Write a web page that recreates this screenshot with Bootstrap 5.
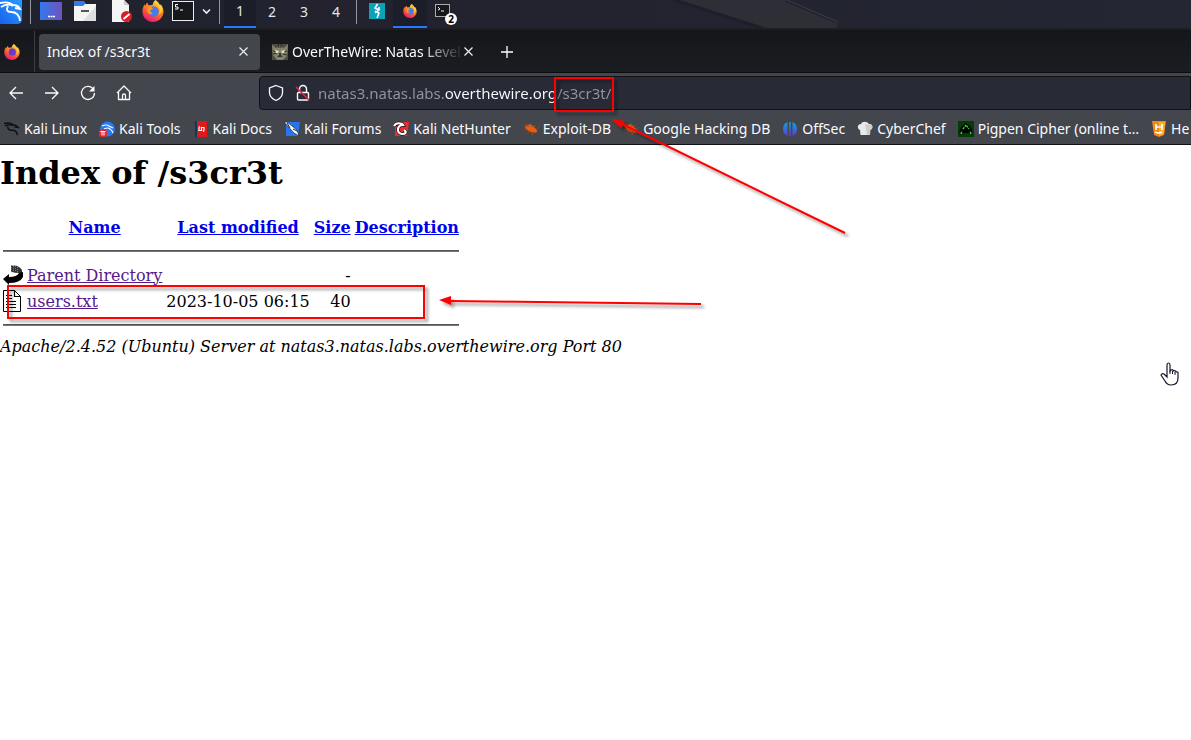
<!DOCTYPE html>
<html lang="en">
<head>
<meta charset="utf-8">
<meta name="viewport" content="width=device-width, initial-scale=1">
<title>Index of /s3cr3t</title>
<link href="https://cdn.jsdelivr.net/npm/bootstrap@5.3.0/dist/css/bootstrap.min.css" rel="stylesheet">
<style>
body{font-family:"Noto Sans","Open Sans",sans-serif;font-size:14px;line-height:20px;background:#fff;color:#000;overflow:hidden}
button{font:inherit;color:inherit;background:none;border:0;padding:0}
svg{display:block;flex:none}
.panel{height:28px;background:linear-gradient(90deg,#20222d 0,#22232f 50%,#242633);color:#e6e6ea;overflow:hidden}
.panel-icons{height:22px}
.rule{width:1px;height:24px;background:#96969b;flex:none}
.space{width:32px;height:28px;padding-bottom:4px}
.space.current,.task.current{background:#1b1d28;border-bottom:2px solid #2777ff}
.task{width:34px;height:28px}
.wallpaper{right:0;top:0;left:0}
.count{left:10px;top:9px;width:12px;height:12px;border-radius:50%;background:#fff;color:#000;font:bold 10px/12px "Noto Sans",sans-serif;text-align:center}
.tabstrip{height:45px;padding-top:1px;background:linear-gradient(#15161a,#1c1d22);border-top:2px solid #1d1e23;border-bottom:1px solid #0c0c0f;color:#fbfbfe}
.pinned{width:35px;border-right:1px solid #3c3d42}
.tab{height:36px;width:221px;border-radius:4px}
.tab.active{background:#44464e}
.fade-label{white-space:nowrap;width:172px;-webkit-mask-image:linear-gradient(90deg,#000 75%,transparent);mask-image:linear-gradient(90deg,#000 75%,transparent)}
.toolbar{background:#44464e;color:#fbfbfe;border-bottom:1px solid #111217}
.navrow{height:40px}
.tool{width:36px;height:36px}
.spring{width:115px}
.address{height:34px;background:#282a36;border:1px solid #111217;border-radius:4px 0 0 4px}
.address input{font-size:15px;line-height:20px;height:30px;padding:0;border:0;outline:0;-webkit-text-fill-color:transparent;color:#fbfbfe;background:linear-gradient(90deg,#94959e 127px,#fbfbfe 127px,#fbfbfe 239px,#94959e 239px);-webkit-background-clip:text;background-clip:text}
.marks{height:31px;gap:12px;white-space:nowrap;overflow:hidden}
.marks a{color:#fbfbfe;text-decoration:none;gap:4px;flex:none}
.listing{font-family:"DejaVu Serif",serif;font-size:16px;line-height:19px}
.listing h1{font-size:32px;font-weight:bold;line-height:38px;margin:0;padding:9px 0 21px}
.listing table{border-collapse:separate;border-spacing:2px}
.listing td,.listing th{padding:1px;height:24px;vertical-align:middle;white-space:pre}
.listing th{text-align:center}
.listing th a{color:#00e}
.listing td a{color:#551a8b}
.listing .line th{height:20px}
.listing hr{margin:8px 0;opacity:1;border:0;border-top:1px solid #555;border-bottom:1px solid #777}
.listing address{margin:0;font-style:italic;line-height:19px}
.notes{left:0;top:0;pointer-events:none}
</style>
</head>
<body>
<svg width="0" height="0" class="position-absolute" aria-hidden="true">
<defs>
<linearGradient id="ffa" x1=".8" y1="0" x2=".3" y2="1"><stop offset="0" stop-color="#fff04a"/><stop offset=".35" stop-color="#ff9a1e"/><stop offset=".7" stop-color="#ff4a3a"/><stop offset="1" stop-color="#e31587"/></linearGradient>
<symbol id="fox" viewBox="0 0 24 24"><path d="M15 0c2 2 3.500 3 4.500 5.500 1-.2 1-.9 1-.9C23 8 23.700 11 23.400 14 22.500 20 17.500 24 12 24 5.500 24 .5 19 .5 12.500c0-3 .8-5.800 2.500-8 0 1 .2 1.500.6 2C4 5 5 3.500 6 3c0 1 .4 2 1 2.600 1.500.3 3-.4 4.500-.2C12 3 13 1 15 0z" fill="url(#ffa)"/><circle cx="12.500" cy="12.500" r="5.800" fill="#477bea"/><path d="M7 7c2 .3 3.500.6 5 2-.5 1-2 1.500-3 2 0 2 1 3.500 3 3.800-3 2.200-6-.3-6.500-3z" fill="#ff9721"/><path d="M16 5c3 2 5 6 2 11 5-3 5-8 1.500-10.500z" fill="#ffd43a"/></symbol>
<symbol id="dragon" viewBox="0 0 16 16"><path d="M0 2.500c3-.8 7-.6 9 1.200M1 5c2.500-1.500 6-1.500 8.500-.5M4 5.500C3.500 8 5 9.300 8 9.200c3-.1 5 1.200 5.500 5M9 3.700c2 0 3.500.8 5 2.600l-3.500-.4" fill="none" stroke="currentColor" stroke-width="1.500"/></symbol>
<symbol id="bug" viewBox="0 0 16 16"><path d="M2 6c3-3 6-3 8-1l3 3c2 2 1 4-1 3.600C8 12 4 10 2 6z" fill="#ec5e10"/><path d="M1 8l4 1M3 3l3 3M8 2l1 4M12 4l-1 3M5 12l2-3M9 14l1-4M14 8l2-2M1 5h4" stroke="#9c4a20" stroke-width="1"/></symbol>
</defs>
</svg>

<header class="panel position-relative d-flex">
  <svg class="wallpaper position-absolute" width="100%" height="28" aria-hidden="true"><path d="M679 0h107l52 22-2 6h-70z" fill="#2d2e36"/><path d="M674 0l88 28" stroke="#1e1f2b" stroke-width="3"/><path d="M787 0l51 22" stroke="#393a47"/><path d="M785 1l52 22" stroke="#1c1d2a"/></svg>
  <button class="position-relative" aria-label="Applications"><svg width="22" height="28"><defs><linearGradient id="kb" x1="0" y1="1" x2="1" y2="0"><stop stop-color="#1763ee"/><stop offset="1" stop-color="#299bff"/></linearGradient></defs><path d="M0 0h22v19q0 5-5 5H0z" fill="url(#kb)"/><path d="M0 3q9-2 13 2M1 7q7-4 12-1M8 6q-3 6 3 6 8 0 9 9M13 5q5 0 7 4l-5-1" fill="none" stroke="#fff" stroke-width="1.800"/></svg></button>
  <span class="rule ms-2 me-2 position-relative"></span>
  <div class="panel-icons d-flex align-items-center position-relative">
    <button aria-label="Desktop"><svg width="23" height="22"><defs><linearGradient id="dk"><stop stop-color="#3478ef"/><stop offset="1" stop-color="#7052bd"/></linearGradient></defs><path d="M1 2h22v18H1z" fill="url(#dk)"/><path d="M9 16.500h7" stroke="#fff" stroke-width="1.500" stroke-dasharray="2 .5"/></svg></button>
    <button class="ms-2 ps-1" aria-label="Files"><svg width="22" height="22"><path d="M0 1h10l2 3h9v5H0z" fill="#3579e8"/><path d="M0 6h9l2-2h11v17H0z" fill="#f4f4f4"/><path d="M22 6v15H9z" fill="#dedee0"/><path d="M7 11h8" stroke="#555" stroke-width="2"/></svg></button>
    <button class="ms-3" aria-label="Text editor"><svg width="21" height="23"><path d="M0 0h12l5 5v17H0z" fill="#f5f5f5"/><path d="M12 0v5h5z" fill="#ccc"/><circle cx="14.500" cy="16.500" r="5.500" fill="#d81d26"/><path d="M11.500 19l6-5" stroke="#fff" stroke-width="2"/></svg></button>
    <button class="ms-2" aria-label="Firefox"><svg width="23" height="22"><use href="#fox" x="1" width="22" height="22"/></svg></button>
    <button class="ms-2" aria-label="Terminal"><svg width="22" height="22"><rect x=".5" y="1.500" width="21" height="19" fill="#17181b" stroke="#eee"/><path d="M6 4.500H3.500V7H6v2H3M8 10h3" fill="none" stroke="#fff"/></svg></button>
    <button class="ms-2" aria-label="More terminals"><svg width="9" height="22"><path d="M1 9.500l3.500 3.500L8 9.500" fill="none" stroke="#eee" stroke-width="1.700"/></svg></button>
  </div>
  <span class="rule ms-2 me-1 position-relative"></span>
  <button class="space current position-relative">1</button><button class="space position-relative">2</button><button class="space position-relative">3</button><button class="space position-relative">4</button>
  <span class="rule ms-1 me-2 position-relative"></span>
  <button class="position-relative ms-1 me-2" aria-label="Burp Suite"><svg width="16" height="28"><path d="M0 3h16v16H0z" fill="#0ca3b8"/><path d="M8.500 4L6 8l4 2-4 3M10 7v3M6 11l4 2-2 5" fill="none" stroke="#fff" stroke-width="1.500"/></svg></button>
  <button class="task current position-relative d-flex justify-content-center pt-1" aria-label="Firefox window"><svg width="14" height="14"><use href="#fox"/></svg></button>
  <button class="position-relative align-self-start mt-1 ms-2" aria-label="Terminal windows"><svg width="16" height="14"><rect x=".5" y=".5" width="14" height="12" fill="#17181b" stroke="#aaa"/><path d="M3 3l2 2-2 1M6 7h3" fill="none" stroke="#eee"/></svg><span class="count position-absolute">2</span></button>
</header>

<nav class="tabstrip d-flex align-items-center" aria-label="Tabs">
  <div class="pinned align-self-stretch d-flex align-items-center ps-1"><svg width="16" height="16"><use href="#fox"/><circle cx="8" cy="8" r="3.500" fill="#7435c9"/></svg></div>
  <div class="tab active d-flex align-items-center justify-content-between ms-1 px-2"><span>Index of /s3cr3t</span><button class="pe-1" aria-label="Close tab"><svg width="9" height="9"><path d="M.5.500l8 8m0-8l-8 8" stroke="#eee" stroke-width="1.200"/></svg></button></div>
  <div class="d-flex align-items-center ps-2 ms-1">
    <svg width="16" height="16"><path d="M0 0h16v16H0z" fill="#4c4d40"/><path d="M0 1l4 3 4-2 4 2 4-4-1 12-4 4H5l-4-5z" fill="#85826c"/><path d="M6 0l1 4M9 0v4M1 7l4 1M15 7l-4 1M1 10l4-1M15 11l-4-1" stroke="#292b25"/><path d="M3 6l4 1-1 2H4zM13 6L9 7l1 2h2z" fill="#dce0bb"/><path d="M7 9h2v2l2 2H5l2-2z" fill="#38372f"/></svg>
    <span class="fade-label ms-1">OverTheWire: Natas Level</span>
    <button aria-label="Close second tab"><svg width="9" height="9"><path d="M.5.500l8 8m0-8l-8 8" stroke="#eee" stroke-width="1.200"/></svg></button>
  </div>
  <button class="ms-4 ps-1" aria-label="New tab"><svg width="12" height="12"><path d="M6 0v12M0 6h12" stroke="#fff" stroke-width="1.300"/></svg></button>
</nav>

<div class="toolbar">
  <div class="navrow d-flex align-items-center">
    <div class="d-flex flex-shrink-0">
      <button class="tool d-flex justify-content-center align-items-center pe-1" aria-label="Back"><svg width="16" height="16" fill="none" stroke="#fbfbfe" stroke-width="1.300"><path d="M15 8H2m6-6L2 8l6 6"/></svg></button>
      <button class="tool d-flex justify-content-center align-items-center pe-1" aria-label="Forward"><svg width="16" height="16" fill="none" stroke="#fbfbfe" stroke-width="1.300"><path d="M1 8h13M8 2l6 6-6 6"/></svg></button>
      <button class="tool d-flex justify-content-center align-items-center pe-1" aria-label="Reload"><svg width="16" height="16" fill="none" stroke="#fbfbfe" stroke-width="1.300"><path d="M13.500 4.500A6.500 6.500 0 1 0 14.500 8"/><path d="M14.500 1v5.500H9z" fill="#fbfbfe" stroke="none"/></svg></button>
      <button class="tool d-flex justify-content-center align-items-center pe-1" aria-label="Home"><svg width="16" height="16" fill="none" stroke="#fbfbfe" stroke-width="1.300" stroke-linejoin="round"><path d="M1 8l7-7 7 7M2.500 7v7.500h11V7M6.500 14v-3.500a1.500 1.500 0 0 1 3 0V14"/></svg></button>
    </div>
    <div class="spring flex-shrink-0"></div>
    <div class="address d-flex align-items-center flex-grow-1 ps-2">
      <svg width="16" height="18" fill="none" stroke="#fbfbfe" stroke-width="1.300"><path d="M8 1.500l6.500 2.500v4.500c0 3.500-3 6.500-6.500 8-3.500-1.500-6.500-4.500-6.500-8V4z"/></svg>
      <label for="url" class="ms-2 me-1"><svg width="22" height="18" fill="none" stroke="#fbfbfe" stroke-width="1.400" role="img" aria-label="Address"><rect x="5.500" y="8.500" width="11" height="7.500" rx="1"/><path d="M7.500 8V5a3.500 3.500 0 0 1 7 0v3"/><path d="M4 3l13 13" stroke="#e2264d" stroke-width="1.600"/></svg></label>
      <input id="url" class="flex-grow-1" type="text" value="natas3.natas.labs.overthewire.org/s3cr3t/" spellcheck="false">
    </div>
  </div>
  <nav class="marks d-flex align-items-center ps-1" aria-label="Bookmarks">
    <a href="#" class="d-flex align-items-center"><svg width="16" height="16" color="#111"><use href="#dragon"/></svg>Kali Linux</a>
    <a href="#" class="d-flex align-items-center"><svg width="16" height="16" color="#fff"><circle cx="8.500" cy="8" r="7.500" fill="#2878f0"/><path d="M3 5q5-2 7 0M5 8q4-2 6 0 2 1 3 4M10 5l4 2" fill="none" stroke="#fff" stroke-width="1.200"/><rect y="8" width="8" height="8" rx="3" fill="#e9272f"/><path d="M1.500 10.500h5M3 10.500v4M5 10.500v4" stroke="#fff"/></svg>Kali Tools</a>
    <a href="#" class="d-flex align-items-center"><svg width="16" height="16"><path d="M2 0h12v16H2z" fill="#e01818"/><path d="M2 0h2v16H2z" fill="#12375f"/><path d="M6 6.500v3h2.500v-3H11v3M6 6.500l1-1M11 9.500l-1 1" fill="none" stroke="#fff" stroke-width="1.200"/></svg>Kali Docs</a>
    <a href="#" class="d-flex align-items-center"><svg width="16" height="16"><path d="M2 1h14l-2 14H2z" fill="#2475ef"/><path d="M0 1l3 0 10 8 2 6-5-3z" fill="#fff" stroke="#222" stroke-width=".7"/><path d="M3 2l3 5M9 8l4 2" stroke="#222"/></svg>Kali Forums</a>
    <a href="#" class="d-flex align-items-center"><svg width="16" height="16"><path d="M2 1h14l-2 14H2z" fill="#ef2b32"/><path d="M1 5c2-4 8-3 9-1-6 0-7 8-1 9 4 0 5-2 2-4" fill="none" stroke="#111" stroke-width="3.600"/><path d="M1 5c2-4 8-3 9-1-6 0-7 8-1 9 4 0 5-2 2-4" fill="none" stroke="#fff" stroke-width="2.200"/></svg>Kali NetHunter</a>
    <a href="#" class="d-flex align-items-center"><svg width="16" height="16"><use href="#bug"/></svg>Exploit-DB</a>
    <a href="#" class="d-flex align-items-center"><svg width="16" height="16"><use href="#bug"/></svg>Google Hacking DB</a>
    <a href="#" class="d-flex align-items-center"><svg width="16" height="16"><defs><linearGradient id="of" x2="0" y2="1"><stop stop-color="#08a9d5"/><stop offset="1" stop-color="#6535dc"/></linearGradient></defs><path d="M5.500 1v14Q1 13 1 8t4.500-7zM10.500 1v14Q15 13 15 8t-4.500-7zM7.200 1h1.500v14H7.200z" fill="url(#of)"/></svg>OffSec</a>
    <a href="#" class="d-flex align-items-center"><svg width="16" height="16"><path d="M3 9C0 8 0 3 4 3c1-3 6-3 8 0 4-1 5 5 1 6l-.5 5h-9z" fill="#e9e9e9"/><path d="M8 3l2 11h3l.5-5c2-1 2-3 1-5z" fill="#cdcdcd"/></svg>CyberChef</a>
    <a href="#" class="d-flex align-items-center"><svg width="16" height="16"><path d="M0 0h16v16H0z" fill="#033c05"/><path d="M8 2q8 5 6 12l-3-2H5l-3 2Q0 7 8 2z" fill="#010501"/><path d="M5 8l3-4 3 4M3 13l1-3M13 13l-1-3" fill="none" stroke="#43cf54" stroke-width="1.500" stroke-dasharray="2 1"/></svg>Pigpen Cipher (online t…</a>
    <a href="#" class="d-flex align-items-center"><svg width="16" height="16"><path d="M1 0h14l-2 14-5 2-5-2z" fill="#f48712"/><path d="M8 1h6l-1 12-5 2z" fill="#ffad22"/><path d="M5 3v6M11 3v6M5 6h6M4 11q4 2 7 0" fill="none" stroke="#fff" stroke-width="1.600"/></svg>He</a>
  </nav>
</div>

<main class="listing">
  <h1>Index of /s3cr3t</h1>
  <table>
    <thead>
      <tr><th><svg width="20" height="22" aria-hidden="true"></svg></th><th><a href="#">Name</a></th><th><a href="#">Last modified</a></th><th><a href="#">Size</a></th><th><a href="#">Description</a></th></tr>
      <tr class="line"><th colspan="5"><hr></th></tr>
    </thead>
    <tbody>
      <tr><td><svg width="20" height="22"><path d="M8 2q7-2 11 4v5q-4-3-6-2-3-1-5-1z" fill="#333"/><path d="M8.500 1v7M10.500 2v5M12.500 2v5M14.500 3v5" stroke="#777" stroke-dasharray="1 1"/><path d="M0 15l6-5v3q8 0 10-4l4-1v5q-3 6-14 6v2z" fill="#000"/></svg></td><td><a href="#">Parent Directory</a></td><td></td><td class="text-end">-</td><td></td></tr>
      <tr><td><svg width="20" height="22"><path d="M.5.500h11l6 6V21.500H.5z" fill="#fff" stroke="#000"/><path d="M11.500.500v6h6M3 5.500h6M3 8.500h6M3 11.500h10M3 14.500h10M3 17.500h10" fill="none" stroke="#000" stroke-width="1.200"/></svg></td><td><a href="#">users.txt</a></td><td>2023-10-05 06:15</td><td class="text-end">40</td><td></td></tr>
      <tr class="line"><th colspan="5"><hr></th></tr>
    </tbody>
  </table>
  <address>Apache/2.4.52 (Ubuntu) Server at natas3.natas.labs.overthewire.org Port 80</address>
</main>

<svg class="notes position-absolute" width="1191" height="420" viewBox="0 0 1191 420" aria-hidden="true">
  <defs><filter id="sh" x="-10%" y="-20%" width="125%" height="160%"><feDropShadow dx="3" dy="3" stdDeviation="1.500" flood-color="#000" flood-opacity=".4"/></filter></defs>
  <g fill="none" stroke="#f00" stroke-width="2" filter="url(#sh)">
    <rect x="555" y="78" width="58" height="33"/>
    <rect x="8" y="286" width="416" height="32"/>
    <path d="M618 122L845 233M448 301L701 304"/>
    <path d="M611 119l14 2-4 7zM439 300l12-4v9z" fill="#f00" stroke="none"/>
  </g>
  <path d="M1167 374v-9q0-2 1.500-2t1.500 2v6l1-1q2-1 2.500 1 2-1 2.500 1 2-.5 2 1v5q0 7-7 7-4 0-6-4l-4-6q1-2 3-1l3 3z" fill="#fff" stroke="#15152b" stroke-width="1.200"/><path d="M1170 371v3M1172.500 371v3M1175 372v3" stroke="#15152b"/>
</svg>
<script src="https://cdn.jsdelivr.net/npm/bootstrap@5.3.0/dist/js/bootstrap.bundle.min.js"></script>
</body>
</html>
